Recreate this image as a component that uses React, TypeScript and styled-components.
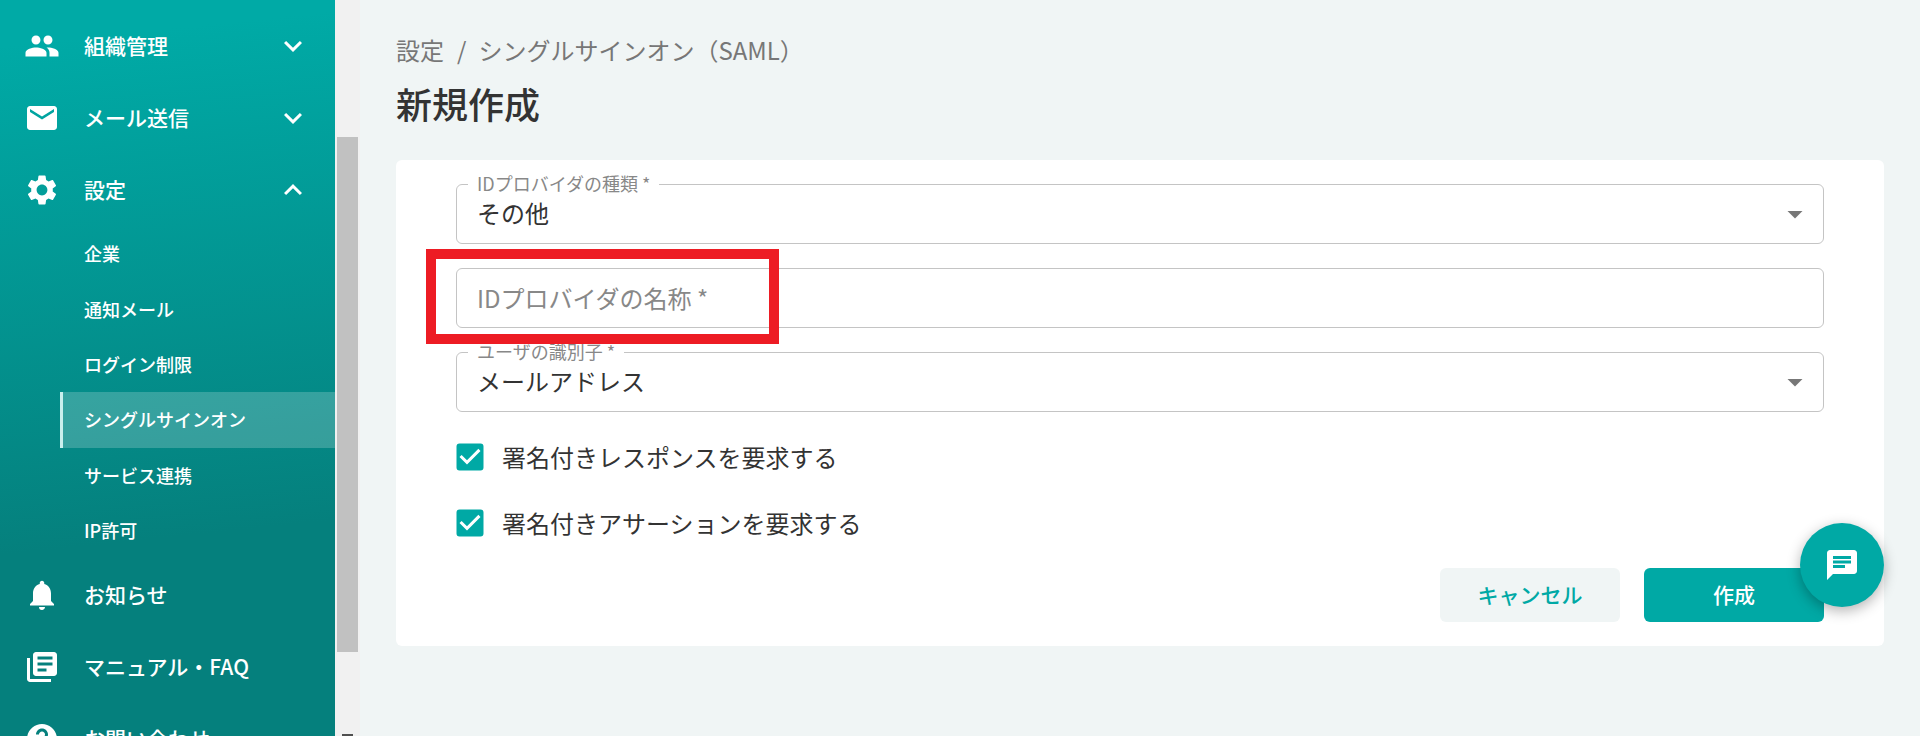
import React from "react";
import styled, { createGlobalStyle } from "styled-components";
import {
  MdPeople,
  MdEmail,
  MdSettings,
  MdNotifications,
  MdLibraryBooks,
  MdHelp,
  MdExpandMore,
  MdExpandLess,
  MdCheckBox,
  MdArrowDropDown,
  MdChat,
} from "react-icons/md";

const GlobalStyle = createGlobalStyle`
  html, body {
    margin: 0;
    padding: 0;
    height: 100%;
    overflow: hidden;
    background: #f0f5f5;
    font-family: "Noto Sans CJK JP", "Noto Sans", sans-serif;
  }
`;

const Page = styled.div`
  display: flex;
  position: relative;
  width: 1920px;
  height: 736px;
  overflow: hidden;
`;

const Sidebar = styled.nav`
  flex: 0 0 335px;
  box-sizing: border-box;
  height: 736px;
  padding-top: 10px;
  overflow: hidden;
  color: #fff;
  background: linear-gradient(174deg, #00aaa6 6%, #05807d 72%);
`;

const MenuRow = styled.div`
  display: flex;
  align-items: center;
  flex: none;
  height: 72px;
  padding-left: 24px;
  font-size: 21px;
  font-weight: 500;
`;

const MenuLabel = styled.span`
  flex: 1;
  margin-left: 24px;
  padding-bottom: 2px;
`;

const Chevron = styled.span`
  display: flex;
  margin-right: 24px;
`;

const SubList = styled.div`
  height: 333px;
`;

const SubRow = styled.div<{ $active?: boolean }>`
  display: flex;
  align-items: center;
  box-sizing: border-box;
  height: 55.4px;
  margin-left: 60px;
  padding-left: ${(p) => (p.$active ? 21 : 24)}px;
  padding-bottom: 1px;
  font-size: 18px;
  font-weight: 500;
  background: ${(p) => (p.$active ? "rgba(255, 255, 255, 0.2)" : "transparent")};
  border-left: ${(p) => (p.$active ? "3px solid #c9efed" : "none")};
`;

const ScrollTrack = styled.div`
  flex: 0 0 25px;
  position: relative;
  box-sizing: border-box;
  height: 736px;
  padding: 137px 2px 0;
  background: #f1f1f1;
`;

const ScrollThumb = styled.div`
  height: 515px;
  background: #c1c1c1;
`;

const ScrollArrow = styled.div`
  position: absolute;
  left: 7px;
  bottom: 0;
  width: 11px;
  height: 2px;
  background: #505050;
`;

const Main = styled.main`
  flex: 1;
  box-sizing: border-box;
  padding: 0 36px;
  background: #f0f5f5;
`;

const Breadcrumb = styled.div`
  display: flex;
  align-items: center;
  height: 98px;
  margin-bottom: -18px;
  font-size: 24px;
  color: #777;
`;

const Slash = styled.span`
  margin: 0 12px 0 13px;
`;

const Title = styled.h1`
  height: 80px;
  margin: 0;
  font-size: 36px;
  font-weight: 500;
  line-height: 46px;
  color: #333;
`;

const Card = styled.section`
  box-sizing: border-box;
  height: 486px;
  padding: 24px 60px;
  background: #fff;
  border-radius: 6px;
`;

const Fields = styled.div`
  display: flex;
  flex-direction: column;
  gap: 24px;
  margin-bottom: 12px;
`;

const SelectBox = styled.fieldset`
  display: flex;
  align-items: center;
  justify-content: space-between;
  box-sizing: border-box;
  height: 60px;
  min-width: 0;
  margin: 0;
  padding: 11px 10px 0 20px;
  border: 1px solid #c4c4c4;
  border-radius: 6px;
  color: #333;
  font-size: 24px;
`;

const SelectLegend = styled.legend`
  height: 1px;
  margin-left: -9px;
  padding: 0 9px;
  font-size: 18px;
  line-height: 1px;
  color: #888;
  transform: translateY(-1px);
`;

const SelectValue = styled.span`
  padding-bottom: 3px;
  line-height: 29px;
`;

const ArrowIcon = styled(MdArrowDropDown)`
  color: #777;
`;

const TextBox = styled.input`
  display: block;
  box-sizing: border-box;
  width: 100%;
  height: 60px;
  padding: 0 20px 2px;
  border: 1px solid #c4c4c4;
  border-radius: 6px;
  outline: none;
  font-family: inherit;
  font-size: 24px;
  color: #333;
  background: #fff;

  &::placeholder {
    color: #888;
    opacity: 1;
  }
`;

const CheckRow = styled.label`
  display: flex;
  align-items: center;
  height: 66px;
  margin-left: -4px;
  font-size: 24px;
  color: #333;
`;

const CheckText = styled.span`
  padding-bottom: 2px;
`;

const CheckIcon = styled(MdCheckBox)`
  margin-right: 14px;
  color: #00a9a5;
`;

const Actions = styled.div`
  display: flex;
  justify-content: flex-end;
  gap: 24px;
  margin-top: 12px;
`;

const Button = styled.button<{ $primary?: boolean }>`
  width: 180px;
  height: 54px;
  padding: 0 0 2px;
  border: none;
  border-radius: 6px;
  font-family: inherit;
  font-size: 21px;
  font-weight: 500;
  color: ${(p) => (p.$primary ? "#fff" : "#00a9a5")};
  background: ${(p) => (p.$primary ? "#00a9a5" : "#f0f5f5")};
`;

const Fab = styled.button`
  position: absolute;
  left: 1800px;
  top: 523px;
  display: flex;
  align-items: center;
  justify-content: center;
  width: 84px;
  height: 84px;
  padding: 0;
  border: none;
  border-radius: 50%;
  color: #fff;
  background: #00a9a5;
  box-shadow: 0 4px 14px rgba(0, 0, 0, 0.3);
`;

const Highlight = styled.div`
  position: absolute;
  left: 426px;
  top: 249px;
  box-sizing: border-box;
  width: 353px;
  height: 95px;
  border: 10px solid #ed1c24;
`;

const topMenu = [
  { label: "組織管理", Icon: MdPeople },
  { label: "メール送信", Icon: MdEmail },
];

const subMenu = ["企業", "通知メール", "ログイン制限", "シングルサインオン", "サービス連携", "IP許可"];

const bottomMenu = [
  { label: "お知らせ", Icon: MdNotifications },
  { label: "マニュアル・FAQ", Icon: MdLibraryBooks },
  { label: "お問い合わせ", Icon: MdHelp },
];

export default function App() {
  return (
    <Page>
      <GlobalStyle />
      <Sidebar>
        {topMenu.map(({ label, Icon }) => (
          <MenuRow key={label}>
            <Icon size={36} />
            <MenuLabel>{label}</MenuLabel>
            <Chevron>
              <MdExpandMore size={36} />
            </Chevron>
          </MenuRow>
        ))}
        <MenuRow>
          <MdSettings size={36} />
          <MenuLabel>設定</MenuLabel>
          <Chevron>
            <MdExpandLess size={36} />
          </Chevron>
        </MenuRow>
        <SubList>
          {subMenu.map((label) => (
            <SubRow key={label} $active={label === "シングルサインオン"}>
              {label}
            </SubRow>
          ))}
        </SubList>
        {bottomMenu.map(({ label, Icon }) => (
          <MenuRow key={label}>
            <Icon size={36} />
            <MenuLabel>{label}</MenuLabel>
          </MenuRow>
        ))}
      </Sidebar>
      <ScrollTrack>
        <ScrollThumb />
        <ScrollArrow />
      </ScrollTrack>
      <Main>
        <Breadcrumb>
          設定<Slash>/</Slash>シングルサインオン（SAML）
        </Breadcrumb>
        <Title>新規作成</Title>
        <Card>
          <Fields>
            <SelectBox>
              <SelectLegend>IDプロバイダの種類 *</SelectLegend>
              <SelectValue>その他</SelectValue>
              <ArrowIcon size={36} />
            </SelectBox>
            <TextBox placeholder="IDプロバイダの名称 *" readOnly />
            <SelectBox>
              <SelectLegend>ユーザの識別子 *</SelectLegend>
              <SelectValue>メールアドレス</SelectValue>
              <ArrowIcon size={36} />
            </SelectBox>
          </Fields>
          <CheckRow>
            <CheckIcon size={36} />
            <CheckText>署名付きレスポンスを要求する</CheckText>
          </CheckRow>
          <CheckRow>
            <CheckIcon size={36} />
            <CheckText>署名付きアサーションを要求する</CheckText>
          </CheckRow>
          <Actions>
            <Button>キャンセル</Button>
            <Button $primary>作成</Button>
          </Actions>
        </Card>
      </Main>
      <Highlight />
      <Fab>
        <MdChat size={36} />
      </Fab>
    </Page>
  );
}
